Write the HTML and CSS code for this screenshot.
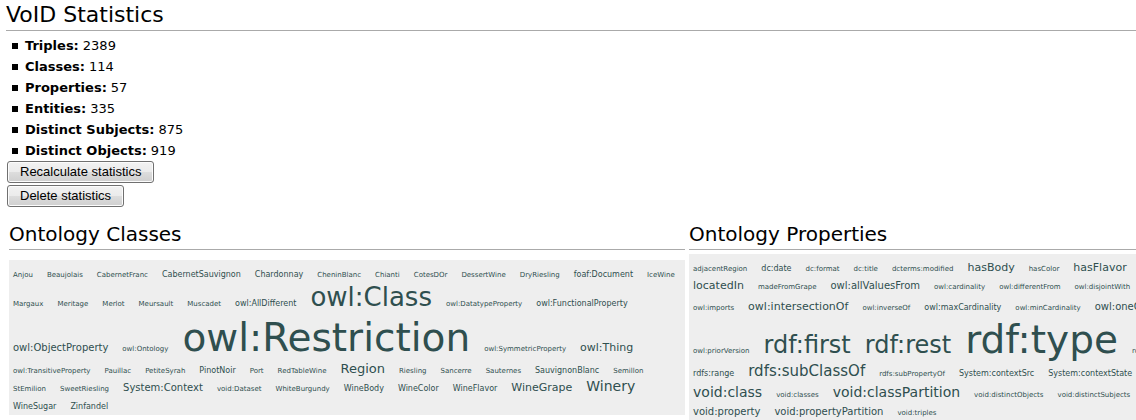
FILE: index.html
```html
<!DOCTYPE html>
<html lang="en">
<head>
<meta charset="utf-8">
<title>VoID Statistics</title>
<link rel="stylesheet" href="styles.css">
</head>
<body>
<main class="page">
<h1 class="title">VoID Statistics</h1>
<ul class="stats">
<li><b>Triples:</b> 2389</li>
<li><b>Classes:</b> 114</li>
<li><b>Properties:</b> 57</li>
<li><b>Entities:</b> 335</li>
<li><b>Distinct Subjects:</b> 875</li>
<li><b>Distinct Objects:</b> 919</li>
</ul>
<div class="actions">
<button type="button" class="btn">Recalculate statistics</button>
<button type="button" class="btn">Delete statistics</button>
</div>
<div class="columns">
<section class="column">
<h2 class="subtitle">Ontology Classes</h2>
<div class="cloud cloud-classes">
<div class="row"><span class="s7">Anjou</span><span class="s7">Beaujolais</span><span class="s7">CabernetFranc</span><span class="s8">CabernetSauvignon</span><span class="s8">Chardonnay</span><span class="s7">CheninBlanc</span><span class="s7">Chianti</span><span class="s7">CotesDOr</span><span class="s7">DessertWine</span><span class="s7">DryRiesling</span><span class="s8">foaf:Document</span><span class="s7">IceWine</span></div>
<div class="row"><span class="s7">Margaux</span><span class="s7">Meritage</span><span class="s7">Merlot</span><span class="s7">Meursault</span><span class="s7">Muscadet</span><span class="s8">owl:AllDifferent</span><span class="s26">owl:Class</span><span class="s7">owl:DatatypeProperty</span><span class="s8">owl:FunctionalProperty</span></div>
<div class="row row-big"><span class="s10">owl:ObjectProperty</span><span class="s7">owl:Ontology</span><span class="s39">owl:Restriction</span><span class="s7">owl:SymmetricProperty</span><span class="s11">owl:Thing</span></div>
<div class="row"><span class="s7">owl:TransitiveProperty</span><span class="s7">Pauillac</span><span class="s7">PetiteSyrah</span><span class="s8">PinotNoir</span><span class="s7">Port</span><span class="s7">RedTableWine</span><span class="s13">Region</span><span class="s7">Riesling</span><span class="s7">Sancerre</span><span class="s7">Sauternes</span><span class="s8">SauvignonBlanc</span><span class="s7">Semillon</span></div>
<div class="row"><span class="s7">StEmilion</span><span class="s7">SweetRiesling</span><span class="s10">System:Context</span><span class="s7">void:Dataset</span><span class="s7">WhiteBurgundy</span><span class="s8">WineBody</span><span class="s8">WineColor</span><span class="s8">WineFlavor</span><span class="s11">WineGrape</span><span class="s14">Winery</span></div>
<div class="row"><span class="s8">WineSugar</span><span class="s8">Zinfandel</span></div>
</div>
</section>
<section class="column">
<h2 class="subtitle">Ontology Properties</h2>
<div class="cloud cloud-properties">
<div class="row"><span class="s7">adjacentRegion</span><span class="s8">dc:date</span><span class="s7">dc:format</span><span class="s7">dc:title</span><span class="s7">dcterms:modified</span><span class="s11">hasBody</span><span class="s7">hasColor</span><span class="s11">hasFlavor</span></div>
<div class="row"><span class="s11">locatedIn</span><span class="s7">madeFromGrape</span><span class="s10">owl:allValuesFrom</span><span class="s7">owl:cardinality</span><span class="s7">owl:differentFrom</span><span class="s7">owl:disjointWith</span></div>
<div class="row row-tall"><span class="s7">owl:imports</span><span class="s11">owl:intersectionOf</span><span class="s7">owl:inverseOf</span><span class="s8">owl:maxCardinality</span><span class="s7">owl:minCardinality</span><span class="s10">owl:oneOf</span></div>
<div class="row row-big"><span class="s7">owl:priorVersion</span><span class="s24">rdf:first</span><span class="s24">rdf:rest</span><span class="s39">rdf:type</span><span class="s7">rdfs:domain</span></div>
<div class="row"><span class="s8">rdfs:range</span><span class="s15">rdfs:subClassOf</span><span class="s7">rdfs:subPropertyOf</span><span class="s8">System:contextSrc</span><span class="s8">System:contextState</span></div>
<div class="row row-tall"><span class="s14">void:class</span><span class="s7">void:classes</span><span class="s14">void:classPartition</span><span class="s7">void:distinctObjects</span><span class="s7">void:distinctSubjects</span></div>
<div class="row"><span class="s10">void:property</span><span class="s10">void:propertyPartition</span><span class="s7">void:triples</span></div>
</div>
</section>
</div>
</main>
</body>
</html>
```
FILE: styles.css
```css
html { overflow: hidden; }
body {
  margin: 0;
  background: #fff;
  color: #000;
  font: 13px/18px "DejaVu Sans", Verdana, sans-serif;
}
.page { padding-left: 6px; }
.title {
  margin: 0;
  border-bottom: 1px solid #aaa;
  font-size: 22px;
  line-height: 30px;
  font-weight: 400;
}
.stats {
  margin: 0;
  padding: 4px 0 0 6px;
  list-style: none;
}
.stats li {
  display: flex;
  align-items: center;
  gap: 4px;
  height: 21px;
}
.stats li::before {
  content: "";
  width: 6px;
  height: 6px;
  margin-right: 3px;
  background: #000;
}
.actions {
  display: flex;
  flex-direction: column;
  align-items: flex-start;
  gap: 2px;
  padding-left: 1px;
}
.btn {
  height: 22px;
  padding: 0 12px;
  border: 1px solid #707070;
  border-radius: 3px;
  background: linear-gradient(#f2f2f2, #ebebeb 50%, #ddd 50%, #cfcfcf);
  box-shadow: inset 0 0 0 1px #fcfcfc;
  color: #000;
  font: 13px/18px "Liberation Sans", Arial, sans-serif;
}
.columns {
  display: grid;
  grid-template-columns: minmax(0, 121fr) minmax(0, 80fr);
  gap: 4px;
  padding: 12px 0 0 3px;
}
.subtitle {
  margin: 0;
  border-bottom: 1px solid #aaa;
  font-size: 20px;
  line-height: 30px;
  font-weight: 400;
}
.cloud {
  padding: 4px;
  background: #eee;
  color: #2f4f4f;
}
.cloud-classes { margin-top: 10px; padding-bottom: 1px; }
.cloud-properties { margin-top: 4px; }
.row { white-space: nowrap; }
.row-tall { padding-top: 3px; }
.row-big { padding-top: 2px; margin-bottom: -2px; }
.row span { margin-right: 14px; line-height: 1.2; }
.s7 { font-size: 7px; }
.s8 { font-size: 8px; }
.s10 { font-size: 10px; }
.s11 { font-size: 11px; }
.s13 { font-size: 13px; }
.s14 { font-size: 14px; }
.s15 { font-size: 15px; }
.s24 { font-size: 24px; }
.s26 { font-size: 26px; }
.s39 { font-size: 39px; }
```
